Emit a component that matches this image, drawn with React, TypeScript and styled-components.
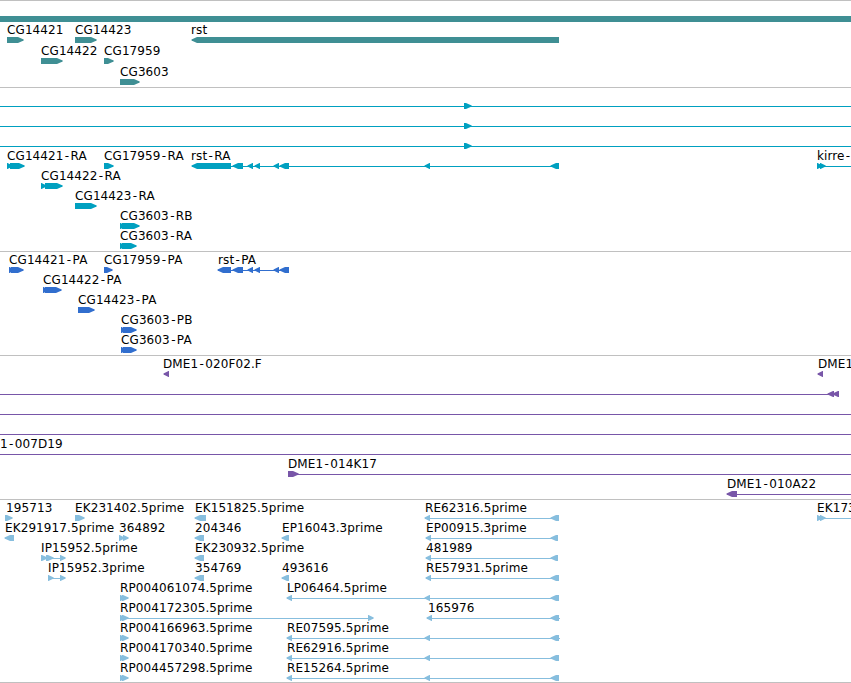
import React from 'react';
import styled, { createGlobalStyle } from 'styled-components';

type Direction = 'left' | 'right';

type Feature = {
  name?: string;
  labelX?: number;
  dir: Direction;
  exons: [number, number][];
  line?: [number, number];
};

type TrackData = {
  id: string;
  color: string;
  rowHeight?: number;
  gap?: number;
  rows: Feature[][];
};

const VIEW_WIDTH = 851;

const GlobalStyle = createGlobalStyle`
  body {
    margin: 0;
    background-color: #ffffff;
    overflow: hidden;
  }
`;

const Browser = styled.main`
  display: flex;
  flex-direction: column;
  width: ${VIEW_WIDTH}px;
  overflow: hidden;
  border-bottom: 1px solid #c0c0c0;
`;

const TrackSection = styled.section<{ $gap: number }>`
  display: flex;
  flex-direction: column;
  border-top: 1px solid #c0c0c0;
  padding-bottom: ${({ $gap }) => $gap}px;
`;

const Row = styled.div<{ $height: number }>`
  position: relative;
  display: flex;
  flex-direction: column;
  height: ${({ $height }) => $height}px;
`;

const LabelStrip = styled.div`
  flex: 0 0 15px;
`;

const Label = styled.span<{ $x: number }>`
  position: absolute;
  top: 1px;
  left: ${({ $x }) => $x}px;
  font-family: 'DejaVu Sans', sans-serif;
  font-size: 12px;
  line-height: 15px;
  letter-spacing: 0.1px;
  color: #000000;
  white-space: nowrap;
`;

const Hyphen = styled.span`
  padding: 0 1.3px;
`;

const Glyphs = styled.svg`
  display: block;
  flex: 0 0 6px;
  overflow: visible;
`;

const right = (name: string, x: number, ...exons: [number, number][]): Feature => ({
  name,
  labelX: x,
  dir: 'right',
  exons,
});

const left = (name: string, x: number, ...exons: [number, number][]): Feature => ({
  name,
  labelX: x,
  dir: 'left',
  exons,
});

const span = (dir: Direction = 'right', ...exons: [number, number][]): Feature => ({
  dir,
  exons,
  line: [0, VIEW_WIDTH],
});

const tracks: TrackData[] = [
  {
    id: 'gene',
    color: '#3f8f94',
    rowHeight: 21,
    gap: 2,
    rows: [
      [{ dir: 'right', exons: [[-10, 870]] }],
      [
        right('CG14421', 7, [7, 24]),
        right('CG14423', 75, [75, 97]),
        left('rst', 191, [191, 559]),
      ],
      [right('CG14422', 41, [41, 63]), right('CG17959', 104, [104, 114])],
      [right('CG3603', 120, [120, 140])],
    ],
  },
  {
    id: 'transcript',
    color: '#00a0c0',
    rows: [
      [span('right', [464, 472])],
      [span('right', [464, 472])],
      [span('right', [464, 472])],
      [
        right('CG14421-RA', 7, [7, 13], [10, 25]),
        right('CG17959-RA', 104, [104, 114]),
        left('rst-RA', 191, [191, 231], [232, 243], [247, 253], [254, 260], [273, 279], [279, 289], [424, 430], [550, 559]),
        { ...right('kirre-', 817, [817, 823], [820, 826]), line: [817, 851] },
      ],
      [right('CG14422-RA', 41, [41, 47], [45, 63])],
      [right('CG14423-RA', 75, [75, 97])],
      [right('CG3603-RB', 120, [120, 126], [122, 140])],
      [right('CG3603-RA', 120, [120, 126], [122, 137])],
    ],
  },
  {
    id: 'protein',
    color: '#316ece',
    rows: [
      [
        right('CG14421-PA', 9, [9, 15], [11, 24]),
        right('CG17959-PA', 104, [104, 113]),
        left('rst-PA', 218, [217, 231], [232, 243], [247, 253], [254, 260], [273, 279], [279, 289]),
      ],
      [right('CG14422-PA', 43, [43, 49], [45, 62])],
      [right('CG14423-PA', 78, [78, 95])],
      [right('CG3603-PB', 121, [121, 127], [123, 137])],
      [right('CG3603-PA', 121, [121, 127], [123, 137])],
    ],
  },
  {
    id: 'bac',
    color: '#7856a8',
    rows: [
      [left('DME1-020F02.F', 163, [163, 169]), left('DME1', 818, [817, 823])],
      [{ dir: 'left', exons: [[827, 834], [832, 839]], line: [0, 838] }],
      [span()],
      [span()],
      [{ name: '1-007D19', labelX: 0, dir: 'right', exons: [], line: [0, 851] }],
      [{ ...right('DME1-014K17', 288, [288, 299]), line: [288, 851] }],
      [{ ...left('DME1-010A22', 727, [726, 737]), line: [727, 851] }],
    ],
  },
  {
    id: 'est',
    color: '#87bede',
    gap: 2,
    rows: [
      [
        right('195713', 6, [5, 13]),
        right('EK231402.5prime', 75, [75, 85]),
        left('EK151825.5prime', 195, [194, 206]),
        left('RE62316.5prime', 425, [424, 430], [550, 559]),
        { ...right('EK173', 817, [817, 823], [820, 826]), line: [817, 851] },
      ],
      [
        left('EK291917.5prime', 5, [4, 14]),
        right('364892', 119, [119, 125], [123, 129]),
        left('204346', 195, [194, 204]),
        left('EP16043.3prime', 282, [281, 289]),
        left('EP00915.3prime', 426, [425, 431], [550, 558]),
      ],
      [
        right('IP15952.5prime', 41, [41, 48], [46, 54], [60, 66]),
        left('EK230932.5prime', 195, [194, 204]),
        left('481989', 426, [425, 431], [550, 558]),
      ],
      [
        right('IP15952.3prime', 48, [48, 54], [60, 66]),
        left('354769', 195, [194, 204]),
        left('493616', 282, [281, 289]),
        left('RE57931.5prime', 426, [425, 431], [550, 559]),
      ],
      [
        right('RP004061074.5prime', 120, [120, 126], [122, 129]),
        left('LP06464.5prime', 287, [286, 292], [424, 430], [550, 559]),
      ],
      [
        right('RP004172305.5prime', 120, [120, 126], [122, 129], [368, 374]),
        { ...left('165976', 428, [426, 432], [550, 559]), line: [427, 560] },
      ],
      [
        right('RP004166963.5prime', 120, [120, 126], [122, 129]),
        { ...left('RE07595.5prime', 287, [286, 292], [424, 430], [550, 559]), line: [287, 560] },
      ],
      [
        right('RP004170340.5prime', 120, [120, 126], [122, 129]),
        left('RE62916.5prime', 287, [286, 292], [424, 430], [550, 559]),
      ],
      [
        right('RP004457298.5prime', 120, [120, 126], [122, 129]),
        left('RE15264.5prime', 287, [286, 292], [424, 430], [550, 559]),
      ],
    ],
  },
];

// block with a pointed end, the head takes at most 6px of it
function exonPoints([start, end]: [number, number], dir: Direction): string {
  const head = Math.min(6, end - start - 0.5);

  if (dir === 'right') {
    const tip = end - 0.3;
    return `${start},0 ${end - head},0 ${tip},2.4 ${tip},3.4 ${end - head},6 ${start},6`;
  }

  const tip = start + 0.5;
  return `${end},0 ${start + head},0 ${tip},2.4 ${tip},3.4 ${start + head},6 ${end},6`;
}

function FeatureGlyph({ feature, color }: { feature: Feature; color: string }) {
  const { exons, dir } = feature;
  const line = feature.line ?? [exons[0][0] + 1, exons[exons.length - 1][1] - 1];

  return (
    <g fill={color}>
      <rect x={line[0]} y={3} width={line[1] - line[0]} height={1} shapeRendering='crispEdges' />
      {exons.map((exon, index) => (
        <polygon key={index} points={exonPoints(exon, dir)} />
      ))}
    </g>
  );
}

function FeatureLabel({ name, x }: { name: string; x: number }) {
  const [stem, suffix] = name.split('-');

  return (
    <Label $x={x}>
      {stem}
      {suffix !== undefined && <Hyphen>-</Hyphen>}
      {suffix}
    </Label>
  );
}

function Track({ color, rowHeight = 20, gap = 3, rows }: TrackData) {
  return (
    <TrackSection $gap={gap}>
      {rows.map((features, rowIndex) => (
        <Row key={rowIndex} $height={rowHeight}>
          <LabelStrip>
            {features.map(
              ({ name, labelX = 0 }) => name && <FeatureLabel key={name} name={name} x={labelX} />
            )}
          </LabelStrip>
          <Glyphs width={VIEW_WIDTH} height={6}>
            {features.map((feature, index) => (
              <FeatureGlyph key={index} feature={feature} color={color} />
            ))}
          </Glyphs>
        </Row>
      ))}
    </TrackSection>
  );
}

export default function App(): React.ReactElement {
  return (
    <>
      <GlobalStyle />
      <Browser>
        {tracks.map((track) => (
          <Track key={track.id} {...track} />
        ))}
      </Browser>
    </>
  );
}
